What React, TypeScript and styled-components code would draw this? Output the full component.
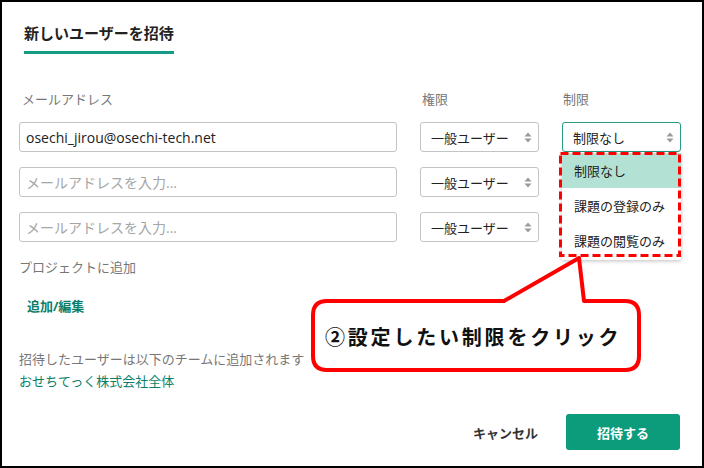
import styled, { createGlobalStyle } from 'styled-components';

const GlobalStyle = createGlobalStyle`
  html, body {
    margin: 0;
    padding: 0;
    background: #ffffff;
  }
  body {
    font-family: "Open Sans", "Noto Sans CJK JP", sans-serif;
    color: #333333;
  }
`;

const Frame = styled.div`
  position: relative;
  box-sizing: border-box;
  width: 704px;
  height: 468px;
  border: 2px solid #000000;
  padding: 0 21px 0 17px;
  overflow: hidden;
`;

const Header = styled.div`
  padding: 20px 0 0 5px;
`;

const Title = styled.h1`
  display: inline-block;
  margin: 0;
  font-size: 15px;
  line-height: 20px;
  font-weight: 700;
  color: #222222;
  padding-bottom: 8px;
  border-bottom: 3px solid #139c83;
`;

const InviteGrid = styled.div`
  display: grid;
  grid-template-columns: 378px 119px 119px;
  column-gap: 23px;
  row-gap: 15px;
  margin-top: 38px;
`;

const Label = styled.div<{ $indent?: number }>`
  font-size: 13px;
  line-height: 15px;
  color: #777777;
  padding-left: ${(p) => p.$indent ?? 0}px;
`;

const EmailInput = styled.div<{ $placeholder?: boolean }>`
  box-sizing: border-box;
  height: 30px;
  border: 1px solid #c4c4c4;
  border-radius: 3px;
  padding: 0 6px;
  display: flex;
  align-items: center;
  font-size: 14px;
  color: ${(p) => (p.$placeholder ? '#a6a6a6' : '#222222')};
`;

const SelectCell = styled.div`
  position: relative;
`;

const SelectBox = styled.div<{ $active?: boolean }>`
  box-sizing: border-box;
  height: 30px;
  border: 1px solid ${(p) => (p.$active ? '#2a9a80' : '#c4c4c4')};
  border-radius: 3px;
  padding: 0 6px 0 10px;
  display: flex;
  align-items: center;
  justify-content: space-between;
  font-size: 13px;
  color: #222222;
`;

const Dropdown = styled.ul`
  position: absolute;
  top: 30px;
  left: 0;
  width: 100%;
  margin: 0;
  padding: 1px 0 2px;
  list-style: none;
  background: #ffffff;
  box-shadow: 0 1px 4px rgba(0, 0, 0, 0.25);
  z-index: 2;
`;

const Option = styled.li<{ $selected?: boolean }>`
  height: 35px;
  display: flex;
  align-items: center;
  padding-left: 12px;
  font-size: 13px;
  color: #222222;
  background: ${(p) => (p.$selected ? '#b3e2d5' : 'transparent')};
`;

const DashedMark = styled.svg`
  position: absolute;
  top: 0;
  left: -3px;
  z-index: 3;
  overflow: visible;
`;

const Section = styled.div<{ $top: number }>`
  margin-top: ${(p) => p.$top}px;
`;

const LinkText = styled.div<{ $bold?: boolean; $indent?: number }>`
  font-size: 13px;
  line-height: 22px;
  color: #0b7f69;
  font-weight: ${(p) => (p.$bold ? 700 : 400)};
  padding-left: ${(p) => p.$indent ?? 0}px;
`;

const Note = styled.div`
  font-size: 13px;
  line-height: 22px;
  color: #777777;
`;

const Footer = styled.div`
  display: flex;
  justify-content: flex-end;
  align-items: center;
  gap: 14px;
  margin-top: 22px;
`;

const GhostButton = styled.button`
  border: none;
  background: none;
  font-family: inherit;
  font-size: 13px;
  font-weight: 700;
  color: #333333;
  padding: 0 14px;
  height: 36px;
`;

const PrimaryButton = styled.button`
  border: none;
  border-radius: 3px;
  background: #0c9b7b;
  color: #ffffff;
  font-family: inherit;
  font-size: 13px;
  font-weight: 700;
  width: 114px;
  height: 36px;
  margin-right: 1px;
`;

const Callout = styled.div`
  position: absolute;
  left: 0;
  top: 0;
  width: 704px;
  height: 468px;
  pointer-events: none;
  z-index: 4;
`;

const CalloutShape = styled.svg`
  position: absolute;
  left: 0;
  top: 0;
`;

const CalloutText = styled.div`
  position: absolute;
  left: 323px;
  top: 319px;
  font-family: "Noto Sans CJK JP", sans-serif;
  font-size: 20px;
  line-height: 32px;
  font-weight: 700;
  letter-spacing: 2.8px;
  color: #111111;
  white-space: nowrap;
`;

const Arrows = () => (
  <svg width="8" height="11" viewBox="0 0 8 11">
    <path d="M4 0.5 L7.5 4.5 H0.5 Z" fill="#9a9a9a" />
    <path d="M4 10.5 L7.5 6.5 H0.5 Z" fill="#9a9a9a" />
  </svg>
);

const rows = [
  { email: 'osechi_jirou@osechi-tech.net', placeholder: false },
  { email: 'メールアドレスを入力...', placeholder: true },
  { email: 'メールアドレスを入力...', placeholder: true },
];

const limitOptions = ['制限なし', '課題の登録のみ', '課題の閲覧のみ'];

export default function App() {
  return (
    <>
      <GlobalStyle />
      <Frame>
        <Header>
          <Title>新しいユーザーを招待</Title>
        </Header>

        <InviteGrid>
          <Label $indent={3}>メールアドレス</Label>
          <Label $indent={2}>権限</Label>
          <Label $indent={1}>制限</Label>

          {rows.map((row, i) => (
            <>
              <EmailInput key={`e${i}`} $placeholder={row.placeholder}>
                {row.email}
              </EmailInput>
              <SelectBox key={`r${i}`}>
                一般ユーザー
                <Arrows />
              </SelectBox>
              {i === 0 ? (
                <SelectCell key={`l${i}`}>
                  <SelectBox $active>
                    制限なし
                    <Arrows />
                  </SelectBox>
                  <Dropdown>
                    {limitOptions.map((o, j) => (
                      <Option key={o} $selected={j === 0}>
                        {o}
                      </Option>
                    ))}
                  </Dropdown>
                  <DashedMark width="122" height="134" viewBox="0 0 122 134">
                    <rect
                      x="1.5"
                      y="31.5"
                      width="119"
                      height="102"
                      fill="none"
                      stroke="#ff0000"
                      strokeWidth="3"
                      strokeDasharray="8 4"
                    />
                  </DashedMark>
                </SelectCell>
              ) : (
                <div key={`l${i}`} />
              )}
            </>
          ))}
        </InviteGrid>

        <Section $top={18}>
          <Label>プロジェクトに追加</Label>
        </Section>
        <Section $top={20}>
          <LinkText $bold $indent={8}>追加/編集</LinkText>
        </Section>
        <Section $top={31}>
          <Note>招待したユーザーは以下のチームに追加されます</Note>
          <LinkText>おせちてっく株式会社全体</LinkText>
        </Section>

        <Footer>
          <GhostButton>キャンセル</GhostButton>
          <PrimaryButton>招待する</PrimaryButton>
        </Footer>

        <Callout>
          <CalloutShape width="704" height="468" viewBox="0 0 704 468">
            <path
              d="M502 299 L577 256 L582 299 L623 299 Q637 299 637 313 L637 354 Q637 368 623 368 L325 368 Q311 368 311 354 L311 313 Q311 299 325 299 Z"
              fill="#ffffff"
              stroke="#ff0000"
              strokeWidth="4"
              strokeLinejoin="round"
            />
          </CalloutShape>
          <CalloutText>②設定したい制限をクリック</CalloutText>
        </Callout>
      </Frame>
    </>
  );
}
